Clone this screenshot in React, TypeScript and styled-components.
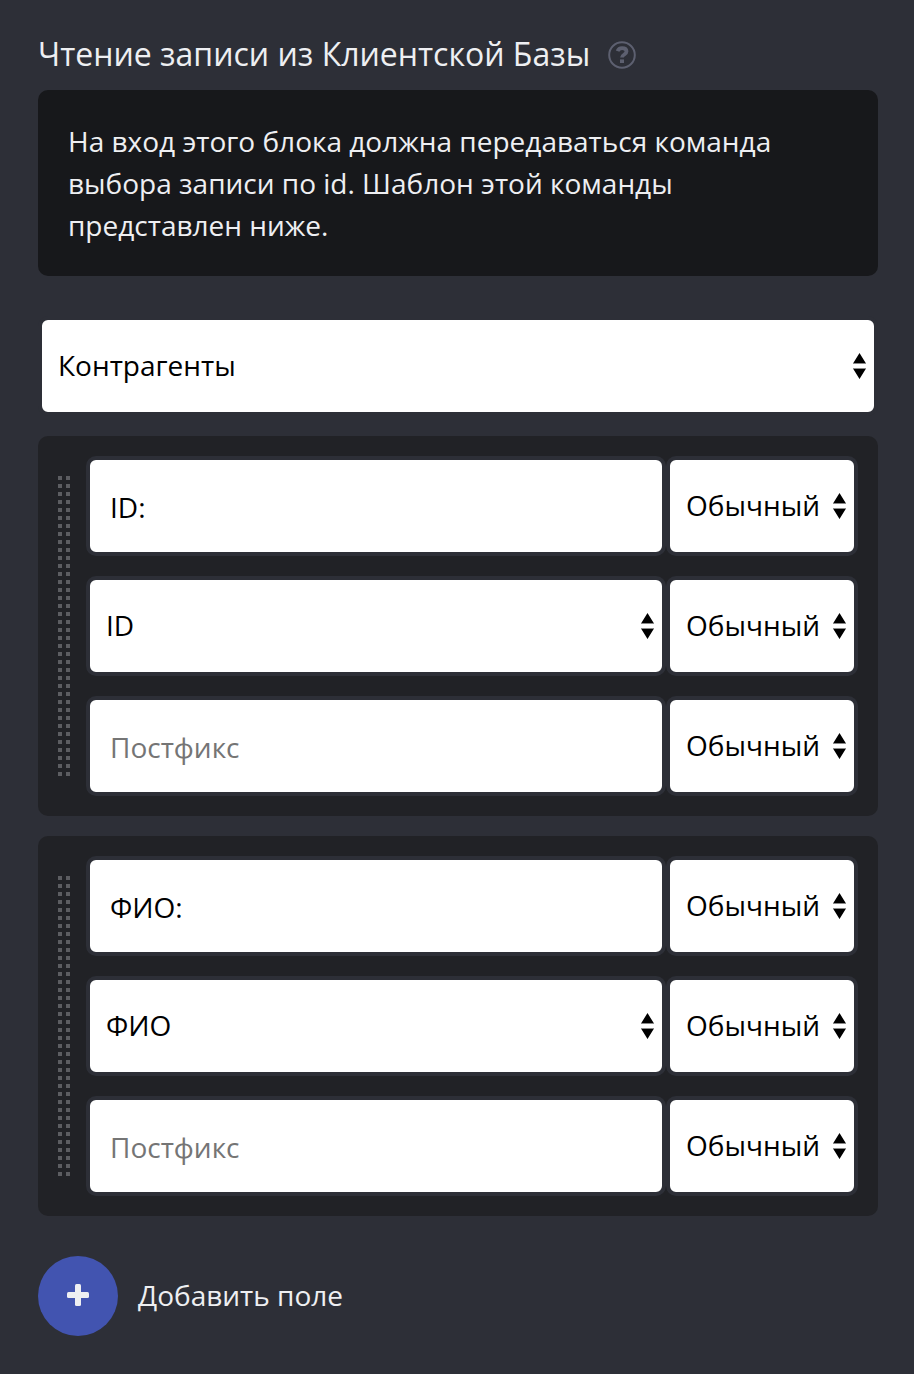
import React, { useId, useState } from "react";
import styled, { createGlobalStyle } from "styled-components";

const colors = {
  page: "#2d2f37",
  note: "#17181b",
  panel: "#212226",
  text: "#eeeff2",
  muted: "#5d6070",
  grip: "#5c5d61",
  accent: "#4254b0",
};

const GlobalStyle = createGlobalStyle`
  *, *::before, *::after { box-sizing: border-box; }
  body {
    margin: 0;
    background: ${colors.page};
    color: ${colors.text};
    font-family: "Open Sans", "Noto Sans", sans-serif;
    font-size: 28px;
    line-height: 42px;
  }
  button, input, select { font: inherit; }
`;

const Page = styled.main`
  display: flex;
  flex-direction: column;
  gap: 20px;
  padding: 30px 36px 38px 38px;
`;

const Header = styled.header`
  display: flex;
  align-items: center;
  gap: 18px;
  height: 50px;
`;

const Title = styled.h1`
  margin: 0;
  padding-bottom: 2px;
  font-size: 32px;
  font-weight: 400;
  line-height: 48px;
`;

const HelpButton = styled.button`
  display: flex;
  padding: 0;
  border: 0;
  background: none;
  color: ${colors.muted};
  cursor: pointer;
`;

const Intro = styled.section`
  display: flex;
  flex-direction: column;
  gap: 10px;
  margin-bottom: 20px;
`;

const Note = styled.p`
  margin: 0;
  padding: 30px;
  border-radius: 10px;
  background: ${colors.note};
`;

const Panel = styled.section`
  display: flex;
  gap: 16px;
  padding: 20px;
  border-radius: 10px;
  background: ${colors.panel};
`;

const Grip = styled.div`
  flex: none;
  width: 12px;
  margin: 20px 0;
  background:
    linear-gradient(${colors.panel}, ${colors.panel}) 4px 0 / 4px 100% no-repeat,
    repeating-linear-gradient(${colors.grip} 0 4px, ${colors.panel} 4px 8px);
  cursor: grab;
`;

const Rows = styled.div`
  display: flex;
  flex: 1;
  flex-direction: column;
  gap: 20px;
  min-width: 0;
`;

const Row = styled.div`
  display: grid;
  grid-template-columns: minmax(0, 1fr) 192px;
`;

const TextInput = styled.input`
  width: 100%;
  height: 100px;
  padding: 2px 20px 0;
  border: 4px solid ${colors.page};
  border-radius: 10px;
  background: #fff;
  color: #000;
  &::placeholder { color: #757575; opacity: 1; }
`;

const SelectBox = styled.div`
  position: relative;
`;

const SelectControl = styled.select`
  appearance: none;
  display: block;
  width: 100%;
  height: 100px;
  padding: 0 28px 2px 16px;
  border: 4px solid ${colors.page};
  border-radius: 10px;
  background: #fff;
  color: #000;
`;

const Arrows = styled.svg`
  position: absolute;
  top: 50%;
  right: 12px;
  margin-top: -13px;
  pointer-events: none;
`;

const AddButton = styled.button`
  display: flex;
  align-items: center;
  align-self: flex-start;
  gap: 20px;
  margin-top: 20px;
  padding: 0;
  border: 0;
  background: none;
  color: inherit;
  cursor: pointer;
`;

const AddIcon = styled.span`
  display: grid;
  place-items: center;
  width: 80px;
  height: 80px;
  padding-bottom: 2px;
  border-radius: 50%;
  background: ${colors.accent};
`;

const AddLabel = styled.span`
  padding-bottom: 2px;
`;

function Select({ label, options }: { label: string; options: string[] }) {
  const id = useId();
  return (
    <SelectBox>
      <SelectControl id={id} aria-label={label}>
        {options.map((option) => (
          <option key={option}>{option}</option>
        ))}
      </SelectControl>
      <Arrows width="13" height="26" viewBox="0 0 13 26" aria-hidden="true">
        <path d="M6.5 0 13 10.5H0Z M0 15.5H13L6.5 26Z" fill="#000" />
        <path d="M0 10.5H13M0 15.5H13" stroke="#8a8a8a" />
      </Arrows>
    </SelectBox>
  );
}

const styles = ["Обычный", "Жирный", "Курсив"];

type Field = { prefix: string; name: string };

function FieldPanel({ field }: { field: Field }) {
  return (
    <Panel>
      <Grip />
      <Rows>
        <Row>
          <TextInput aria-label="Префикс" placeholder="Префикс" defaultValue={field.prefix} />
          <Select label="Стиль префикса" options={styles} />
        </Row>
        <Row>
          <Select label="Поле" options={[field.name]} />
          <Select label="Стиль поля" options={styles} />
        </Row>
        <Row>
          <TextInput aria-label="Постфикс" placeholder="Постфикс" />
          <Select label="Стиль постфикса" options={styles} />
        </Row>
      </Rows>
    </Panel>
  );
}

export default function App() {
  const [fields, setFields] = useState<Field[]>([
    { prefix: "ID:", name: "ID" },
    { prefix: "ФИО:", name: "ФИО" },
  ]);

  return (
    <>
      <GlobalStyle />
      <Page>
        <Intro>
          <Header>
            <Title>Чтение записи из Клиентской Базы</Title>
            <HelpButton type="button" aria-label="Справка">
              <svg width="28" height="28" viewBox="0 0 28 28" fill="none" aria-hidden="true">
                <circle cx="14" cy="14" r="12.8" stroke="currentColor" strokeWidth="2" />
                <path
                  d="M9.6 10.2C10.4 7.9 12 7.1 14.1 7.1C16.8 7.1 18.5 8.5 18.5 10.6C18.5 13.6 14 13.4 14 16.6"
                  stroke="currentColor"
                  strokeWidth="3.8"
                />
                <path d="M12 18.4H16V22H12Z" fill="currentColor" />
              </svg>
            </HelpButton>
          </Header>
          <Note>
            На вход этого блока должна передаваться команда выбора записи по id. Шаблон этой
            команды представлен ниже.
          </Note>
        </Intro>
        <Select label="Таблица" options={["Контрагенты"]} />
        {fields.map((field, index) => (
          <FieldPanel key={index} field={field} />
        ))}
        <AddButton
          type="button"
          onClick={() => setFields([...fields, { prefix: "", name: "ID" }])}
        >
          <AddIcon>
            <svg width="22" height="22" viewBox="0 0 22 22" fill="currentColor" aria-hidden="true">
              <rect x="8" width="6" height="22" rx="1.5" />
              <rect y="8" width="22" height="6" rx="1.5" />
            </svg>
          </AddIcon>
          <AddLabel>Добавить поле</AddLabel>
        </AddButton>
      </Page>
    </>
  );
}
